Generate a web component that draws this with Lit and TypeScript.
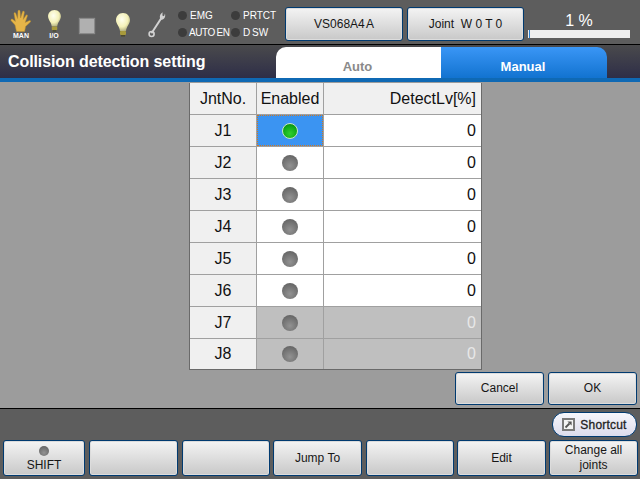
import { LitElement, html, css, svg } from "lit";
import { customElement } from "lit/decorators.js";

const led = (on = false) => html`<span class="led ${on ? "on" : ""}"></span>`;

const hand = svg`<svg width="22" height="23" viewBox="0 0 22 23"><path d="M6.5 22.5 L5 16 L1 11.5 Q.8 9.6 2.6 10.2 L5.4 12.4 L4 4.5 Q4.4 3 5.6 4 L7.6 9.5 L8 1.8 Q9 .4 10 1.8 L10.6 9 L12.6 2.4 Q13.8 1.4 14.4 3 L13.2 10.4 L16.2 6 Q17.6 5.4 17.4 7 L15.2 13.4 L19.6 11.4 Q21.4 11.4 20.4 13 L15.6 17.4 L14.6 22.5 Z" fill="#e6b548" stroke="#b98d2c" stroke-width=".5"/></svg>`;

const bulb = (w: number, h: number) => svg`<svg width="${w}" height="${h}" viewBox="0 0 16 25"><defs><radialGradient id="b${w}" cx=".42" cy=".35" r=".7"><stop offset="0" stop-color="#fffff0"/><stop offset=".6" stop-color="#f4f1b8"/><stop offset="1" stop-color="#a8a678"/></radialGradient></defs><path d="M8 1 C3.5 1 1 4.4 1 8 C1 12 4.6 14.5 5 19 H11 C11.4 14.5 15 12 15 8 C15 4.4 12.5 1 8 1 Z" fill="url(#b${w})"/><rect x="5" y="19" width="6" height="4" rx="1" fill="#a89a3c"/><rect x="6" y="23" width="4" height="1.6" fill="#4c4a30"/></svg>`;

const wrench = svg`<svg width="18" height="27" viewBox="0 0 18 27"><path d="M13.4 7 L4 21.5" stroke="#d2d2d2" stroke-width="2" stroke-linecap="round"/><path d="M12.6 8.5 Q10.8 5 13.2 2.4 L14.6 1.2 L14.4 4.4 L16 5.2 L17 2.4 Q17.8 6 15.6 8 Q14.2 9.2 12.6 8.5 Z" fill="#d2d2d2"/><circle cx="3.6" cy="23" r="2.5" fill="none" stroke="#d2d2d2" stroke-width="1.6"/></svg>`;

const shortcut = svg`<svg width="13" height="13" viewBox="0 0 13 13"><rect x="1" y="1" width="11" height="11" fill="#f4f4f4" stroke="#7a7a7a" stroke-width="2"/><path d="M3.5 9.5 L7.5 5.5" stroke="#555" stroke-width="1.8"/><path d="M5.4 3.4 H9.6 V7.6 Z" fill="#555"/></svg>`;

interface Row { name: string; on?: boolean; off?: boolean }
const rows: Row[] = [
  { name: "J1", on: true },
  { name: "J2" },
  { name: "J3" },
  { name: "J4" },
  { name: "J5" },
  { name: "J6" },
  { name: "J7", off: true },
  { name: "J8", off: true },
];

@customElement("app-root")
export class AppRoot extends LitElement {
  static styles = css`
    :host {
      display: flex;
      flex-direction: column;
      width: 640px;
      height: 479px;
      overflow: hidden;
      font-family: "Liberation Sans", Arial, sans-serif;
      color: #111;
      background: #5d5d5d;
    }
    .status {
      height: 40px;
      padding-top: 4px;
      flex: none;
      display: flex;
      align-items: center;
      background: #5d5d5d;
      border-bottom: 1px solid #000;
    }
    .slot {
      flex: none;
      display: flex;
      flex-direction: column;
      align-items: center;
      justify-content: center;
      color: #fff;
      font-size: 7px;
      line-height: 7px;
      font-weight: bold;
    }
    .s1 { width: 42px; }
    .s2 { width: 24px; }
    .s3 { width: 42px; padding-top: 4px; }
    .s4 { width: 30px; }
    .s5 { width: 38px; }
    .square {
      width: 14px;
      height: 14px;
      background: #b0b0b0;
      box-shadow: 0 0 1px 1px #8a8a8a;
    }
    .leds {
      flex: none;
      width: 106px;
      margin-left: 2px;
      display: grid;
      grid-template-columns: 53px 53px;
      row-gap: 6px;
      color: #fff;
      font-size: 10px;
      line-height: 11px;
    }
    .leds div { display: flex; align-items: center; gap: 3px; white-space: nowrap; }
    .leds .tight span:last-child { letter-spacing: -0.4px; word-spacing: -1px; margin-left: -1px; }
    .leds .dsw span:last-child { word-spacing: -1px; }
    .led-dark {
      flex: none;
      width: 9px;
      height: 9px;
      border-radius: 50%;
      background: #3c3c3c;
    }
    .btn {
      flex: none;
      box-sizing: border-box;
      display: flex;
      flex-direction: column;
      align-items: center;
      justify-content: center;
      border: 1px solid #003a70;
      border-radius: 3px;
      background: linear-gradient(#f4f4f4, #c8c8c8);
      box-shadow: inset 0 0 0 1px #dcdcdc;
      font-size: 12px;
      line-height: 15px;
      color: #161616;
      text-align: center;
    }
    .top-btns { display: flex; gap: 4px; margin-left: 1px; }
    .top-btns .btn { width: 117px; height: 34px; }
    .top-btns .btn:first-child { width: 118px; word-spacing: -1.5px; }
    .speed {
      align-self: flex-start;
      margin: 8px 0 0 4px;
      width: 102px;
      display: flex;
      flex-direction: column;
      align-items: center;
      color: #fff;
      font-size: 16px;
      line-height: 18px;
    }
    .bar { box-sizing: border-box; width: 102px; height: 8px; background: #eee; }
    .bar i { display: block; width: 1px; height: 8px; margin-left: 1px; background: #2a7fd0; }

    .title {
      height: 33px;
      flex: none;
      display: flex;
      align-items: stretch;
      background: linear-gradient(#4a4a4c, #2e2e48);
      border-bottom: 4px solid #0f69b4;
    }
    .title h1 {
      width: 276px;
      margin: 0;
      padding-left: 8px;
      box-sizing: border-box;
      align-self: center;
      font-size: 16px;
      line-height: 18px;
      letter-spacing: -0.1px;
      color: #fff;
      font-weight: bold;
      white-space: nowrap;
    }
    .tab {
      margin-top: 2px;
      width: 165px;
      display: flex;
      align-items: center;
      justify-content: center;
      font-size: 13px;
      font-weight: bold;
      padding: 7px 2px 0 0;
      box-sizing: border-box;
    }
    .tab.auto { background: #fff; color: #8a8a8a; border-top-left-radius: 10px; }
    .tab.man {
      width: 166px;
      background: linear-gradient(#3a96f6, #1273d0);
      color: #fff;
      border-top-right-radius: 10px;
    }

    .content {
      flex: 1;
      min-height: 0;
      display: flex;
      flex-direction: column;
      align-items: flex-end;
      background: #9c9c9c;
      border-bottom: 1px solid #000;
    }
    .table {
      align-self: flex-start;
      margin: 1px 0 0 189px;
      display: grid;
      grid-template-columns: 66px 66px 157px;
      grid-template-rows: repeat(8, 31px) 30px;
      gap: 1px;
      background: #a0a0a0;
      border: 1px solid #6a6a6a;
      border-top: 0;
      font-size: 16px;
    }
    .cell {
      box-sizing: border-box;
      display: flex;
      align-items: center;
      justify-content: center;
      background: #fff;
    }
    .head, .name { background: #f0f0f0; }
    .right { justify-content: flex-end; padding-right: 5px; }
    .cell.sel { background: #3b94f2; border: 1px dotted #d07820; }
    .cell.dis { background: #bfbfbf; color: #e8e8e8; }
    .led {
      width: 16px;
      height: 16px;
      border-radius: 50%;
      box-sizing: border-box;
      background: radial-gradient(circle at 50% 68%, #929292, #6e6e6e 65%, #585858);
    }
    .led.on {
      background: radial-gradient(circle at 50% 68%, #2fd02f, #10a818 60%, #0a7a10);
      border: 1px solid #c8e8c0;
    }
    .actions {
      display: flex;
      gap: 4px;
      margin: 2px 3px 0 0;
    }
    .actions .btn { width: 89px; height: 33px; }

    .footer {
      flex: none;
      height: 70px;
      display: flex;
      flex-direction: column;
      align-items: flex-end;
    }
    .pill {
      box-sizing: border-box;
      width: 85px;
      height: 25px;
      margin: 3px 3px 3px 0;
      display: flex;
      align-items: center;
      justify-content: center;
      gap: 5px;
      font-size: 12px;
      letter-spacing: 0.2px;
      color: #222;
      -webkit-text-stroke: 0.3px #222;
      border: 1px solid #003a70;
      border-radius: 12px;
      background: linear-gradient(#f6f6fc, #dcdcec);
    }
    .soft {
      align-self: stretch;
      display: grid;
      grid-template-columns: 82px 93px 92px 92px 92px 92px 92px;
      padding-left: 3px;
    }
    .soft .btn { width: auto; height: 36px; margin-left: 3px; }
    .soft .btn.first { margin-left: 0; justify-content: flex-end; padding-bottom: 2px; }
    .soft .btn.wide { margin-left: 4px; }
    .soft .led { width: 10px; height: 10px; margin-bottom: 2px; }
  `;

  render() {
    return html`
      <div class="status">
        <div class="slot s1">${hand}<span>MAN</span></div>
        <div class="slot s2">${bulb(15, 23)}<span>I/O</span></div>
        <div class="slot s3"><div class="square"></div></div>
        <div class="slot s4">${bulb(16, 25)}</div>
        <div class="slot s5">${wrench}</div>
        <div class="leds">
          <div><span class="led-dark"></span><span>EMG</span></div>
          <div><span class="led-dark"></span><span>PRTCT</span></div>
          <div class="tight"><span class="led-dark"></span><span>AUTO EN</span></div>
          <div class="dsw"><span class="led-dark"></span><span>D SW</span></div>
        </div>
        <div class="top-btns">
          <div class="btn">VS068A4 A</div>
          <div class="btn">Joint&nbsp; W 0 T 0</div>
        </div>
        <div class="speed">
          <span>1 %</span>
          <div class="bar"><i></i></div>
        </div>
      </div>
      <div class="title">
        <h1>Collision detection setting</h1>
        <div class="tab auto">Auto</div>
        <div class="tab man">Manual</div>
      </div>
      <div class="content">
        <div class="table">
          <div class="cell head">JntNo.</div>
          <div class="cell head">Enabled</div>
          <div class="cell head right">DetectLv[%]</div>
          ${rows.map(
            (r) => html`
              <div class="cell name">${r.name}</div>
              <div class="cell ${r.on ? "sel" : ""} ${r.off ? "dis" : ""}">${led(r.on)}</div>
              <div class="cell right ${r.off ? "dis" : ""}">0</div>
            `
          )}
        </div>
        <div class="actions">
          <div class="btn">Cancel</div>
          <div class="btn">OK</div>
        </div>
      </div>
      <div class="footer">
        <div class="pill">${shortcut}<span>Shortcut</span></div>
        <div class="soft">
          <div class="btn first">${led()}SHIFT</div>
          <div class="btn wide"></div>
          <div class="btn wide"></div>
          <div class="btn">Jump To</div>
          <div class="btn wide"></div>
          <div class="btn">Edit</div>
          <div class="btn">Change all<br />joints</div>
        </div>
      </div>
    `;
  }
}
